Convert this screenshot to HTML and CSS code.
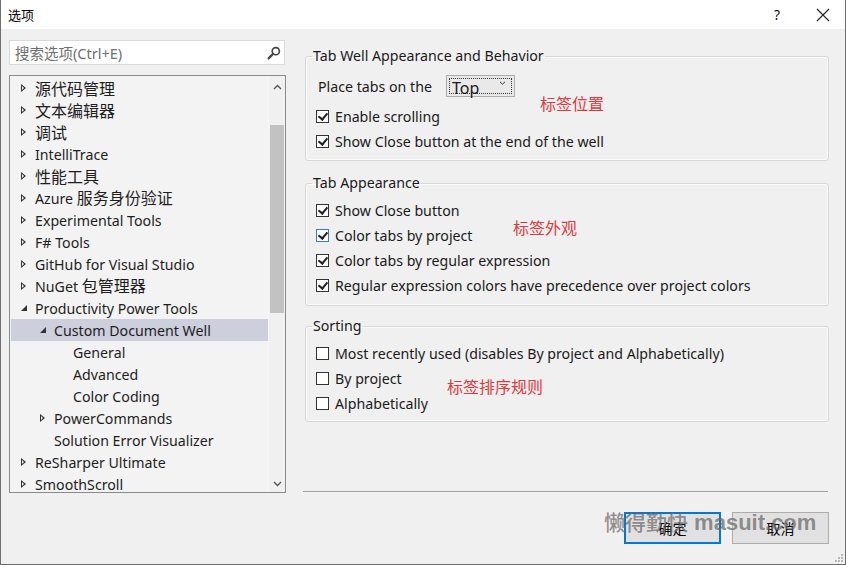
FILE: index.html
```html
<!DOCTYPE html>
<html lang="zh-CN">
<head>
<meta charset="utf-8">
<title>选项</title>
<link rel="stylesheet" href="styles.css">
</head>
<body>
<div class="window">
  <div class="titlebar">
    <span class="title">选项</span>
    <span class="tb-help">?</span>
    <span class="tb-close">
      <svg width="14" height="14" viewBox="0 0 14 14"><path d="M1 1 L13 13 M13 1 L1 13" stroke="#222" stroke-width="1.1" fill="none"/></svg>
    </span>
  </div>
  <div class="main">
    <div class="left">
      <div class="search">
        <span class="placeholder"><span class="cjk-s">搜索选项</span>(Ctrl+E)</span>
        <svg class="search-icon" width="14" height="14" viewBox="0 0 14 14"><circle cx="8.8" cy="5.2" r="3.6" stroke="#444" stroke-width="1.6" fill="none"/><path d="M6.2 7.8 L1.6 12.4" stroke="#444" stroke-width="2.2" stroke-linecap="round"/></svg>
      </div>
      <div class="tree">
        <div class="tree-list">
          <div class="row l1"><span class="tw closed"></span><span class="cjk">源代码管理</span></div>
          <div class="row l1"><span class="tw closed"></span><span class="cjk">文本编辑器</span></div>
          <div class="row l1"><span class="tw closed"></span><span class="cjk">调试</span></div>
          <div class="row l1 lat"><span class="tw closed"></span>IntelliTrace</div>
          <div class="row l1"><span class="tw closed"></span><span class="cjk">性能工具</span></div>
          <div class="row l1"><span class="tw closed"></span><span class="lbl">Azure <span class="cjk">服务身份验证</span></span></div>
          <div class="row l1 lat"><span class="tw closed"></span>Experimental Tools</div>
          <div class="row l1 lat"><span class="tw closed"></span>F# Tools</div>
          <div class="row l1 lat"><span class="tw closed"></span>GitHub for Visual Studio</div>
          <div class="row l1"><span class="tw closed"></span><span class="lbl">NuGet <span class="cjk">包管理器</span></span></div>
          <div class="row l1 lat"><span class="tw open"></span>Productivity Power Tools</div>
          <div class="row l2 lat selected"><span class="tw open"></span>Custom Document Well</div>
          <div class="row l3 lat"><span class="tw"></span>General</div>
          <div class="row l3 lat"><span class="tw"></span>Advanced</div>
          <div class="row l3 lat"><span class="tw"></span>Color Coding</div>
          <div class="row l2 lat"><span class="tw closed"></span>PowerCommands</div>
          <div class="row l2 lat"><span class="tw"></span>Solution Error Visualizer</div>
          <div class="row l1 lat"><span class="tw closed"></span>ReSharper Ultimate</div>
          <div class="row l1 lat"><span class="tw closed"></span>SmoothScroll</div>
        </div>
        <div class="vscroll">
          <svg class="sb-arrow" width="9" height="6" viewBox="0 0 9 6"><path d="M1 5 L4.5 1.5 L8 5" stroke="#555" stroke-width="1.4" fill="none"/></svg>
          <div class="sb-track"><div class="sb-thumb"></div></div>
          <svg class="sb-arrow" width="9" height="6" viewBox="0 0 9 6"><path d="M1 1 L4.5 4.5 L8 1" stroke="#555" stroke-width="1.4" fill="none"/></svg>
        </div>
      </div>
    </div>
    <div class="right">
      <fieldset class="group g1">
        <legend>Tab Well Appearance and Behavior</legend>
        <div class="place-row">
          <span class="place-label">Place tabs on the</span>
          <span class="combo"><span class="combo-focus"><span class="combo-text">Top</span><svg class="combo-chev" width="7" height="4" viewBox="0 0 7 4"><path d="M1 0.8 L3.5 3.2 L6 0.8" stroke="#333" stroke-width="1" fill="none"/></svg></span></span>
        </div>
        <div class="cb-row"><span class="cb checked"></span>Enable scrolling</div>
        <div class="cb-row"><span class="cb checked"></span>Show Close button at the end of the well</div>
        <span class="note n1">标签位置</span>
      </fieldset>
      <fieldset class="group g2">
        <legend>Tab Appearance</legend>
        <div class="cb-row"><span class="cb checked"></span>Show Close button</div>
        <div class="cb-row"><span class="cb checked hover"></span>Color tabs by project</div>
        <div class="cb-row"><span class="cb checked"></span>Color tabs by regular expression</div>
        <div class="cb-row"><span class="cb checked"></span>Regular expression colors have precedence over project colors</div>
        <span class="note n2">标签外观</span>
      </fieldset>
      <fieldset class="group g3">
        <legend>Sorting</legend>
        <div class="cb-row"><span class="cb"></span>Most recently used (disables By project and Alphabetically)</div>
        <div class="cb-row"><span class="cb"></span>By project</div>
        <div class="cb-row"><span class="cb"></span>Alphabetically</div>
        <span class="note n3">标签排序规则</span>
      </fieldset>
      <div class="separator"></div>
      <div class="buttons">
        <button class="btn primary">确定</button>
        <button class="btn">取消</button>
        <span class="watermark"><span class="wm-cjk">懒得勤快</span> masuit.com</span>
      </div>
    </div>
  </div>
  <svg class="grip" width="10" height="10" viewBox="0 0 10 10"><g fill="#b8b8b8"><rect x="8" y="2" width="2" height="2"/><rect x="5" y="5" width="2" height="2"/><rect x="8" y="5" width="2" height="2"/><rect x="2" y="8" width="2" height="2"/><rect x="5" y="8" width="2" height="2"/><rect x="8" y="8" width="2" height="2"/></g></svg>
</div>
</body>
</html>
```

FILE: styles.css
```css
* { box-sizing: border-box; }
html, body { margin: 0; padding: 0; }
body {
  background: #f0f0f0;
  font-family: "Segoe UI", "Noto Sans", "Noto Sans CJK SC", sans-serif;
  font-size: 14.2px;
  color: #1e1e1e;
}
.cjk {
  font-family: "Noto Sans CJK SC", sans-serif;
  font-size: 16px;
}
.lbl { line-height: 22px; }
.cjk-s {
  font-family: "Noto Sans CJK SC", sans-serif;
  font-size: 14.5px;
}
.window {
  position: relative;
  width: 846px;
  height: 565px;
  background: #f0f0f0;
  border-left: 1px solid #6e6e6e;
  border-right: 1px solid #6e6e6e;
  border-bottom: 1px solid #6e6e6e;
  overflow: hidden;
}
.titlebar {
  height: 29px;
  background: #fff;
  display: flex;
  align-items: center;
  margin: 0 -1px;
  padding: 0 0 0 8px;
  font-family: "Noto Sans CJK SC", sans-serif;
}
.title { font-size: 13px; color: #000; flex: 1; }
.tb-help { font-size: 14px; color: #111; width: 46px; text-align: center; font-family: "Noto Sans", sans-serif; }
.tb-close { width: 46px; display: flex; justify-content: center; }
.main {
  display: flex;
  height: 535px;
}
.left {
  width: 285px;
  flex: none;
  padding: 11px 0 0 8px;
}
.search {
  height: 25px;
  width: 276px;
  background: #fff;
  border: 1px solid #dadada;
  display: flex;
  align-items: center;
  padding: 0 0 0 5px;
}
.placeholder {
  flex: 1;
  color: #707070;
  font-size: 14.5px;
}
.search-icon { margin-right: 3px; }
.tree {
  margin-top: 10px;
  width: 277px;
  height: 418px;
  border: 1px solid #8a8a8a;
  background: #f3f3f3;
  display: flex;
  overflow: hidden;
}
.tree-list {
  flex: 1;
  padding-top: 1px;
  padding-left: 1px;
  overflow: hidden;
}
.row {
  height: 22px;
  line-height: 22px;
  display: flex;
  align-items: center;
  white-space: nowrap;
  color: #1e1e1e;
}
.row.lat { padding-top: 1px; }
.row.l1 { padding-left: 9px; }
.row.l2 { padding-left: 28px; }
.row.l3 { padding-left: 47px; }
.row.selected { background: #cdcfdc; }
.tw {
  width: 15px;
  height: 22px;
  flex: none;
  position: relative;
  align-self: flex-start;
}
.row.lat .tw { margin-top: -1px; }
.tw.closed::before {
  content: "";
  position: absolute;
  left: 1px; top: 7px;
  width: 0; height: 0;
  border-top: 4px solid transparent;
  border-bottom: 4px solid transparent;
  border-left: 5px solid #333;
}
.tw.closed::after {
  content: "";
  position: absolute;
  left: 2px; top: 9px;
  width: 0; height: 0;
  border-top: 2px solid transparent;
  border-bottom: 2px solid transparent;
  border-left: 2.5px solid #f3f3f3;
}
.tw.open::before {
  content: "";
  position: absolute;
  left: 1px; top: 8px;
  width: 0; height: 0;
  border-bottom: 6px solid #333;
  border-left: 6px solid transparent;
}
.vscroll {
  width: 17px;
  flex: none;
  display: flex;
  flex-direction: column;
  align-items: center;
  background: #f0f0f0;
  border-left: 1px solid #f7f7f7;
}
.sb-arrow { margin: 8px 0 6px; flex: none; }
.sb-arrow:last-child { margin: 6px 0 5px; }
.sb-track { flex: 1; width: 100%; padding: 29px 1px 0; }
.sb-thumb { height: 188px; background: #c2c2c2; }

.right {
  width: 526px;
  flex: none;
  margin-left: 17px;
  padding-top: 18px;
  display: flex;
  flex-direction: column;
}
.group {
  position: relative;
  margin: 0 0 0 2px;
  width: 524px;
  padding: 0 0 0 10px;
  border: 1px solid #d7d7d7;
  border-radius: 3px;
  box-shadow: inset 0 0 0 1px #fbfbfb;
  color: #1a1a1a;
}
.group legend {
  padding: 0 1px;
  margin-left: -4px;
  line-height: 18px;
  height: 18px;
  color: #1a1a1a;
}
.g1 { padding-bottom: 6px; }
.g2 { margin-top: 13px; padding-top: 6px; padding-bottom: 7px; }
.g3 { margin-top: 11px; padding-top: 6px; padding-bottom: 5px; }
.place-row {
  margin-top: 10px;
  height: 22px;
  display: flex;
  align-items: center;
  padding-left: 2px;
}
.place-label { width: 128px; }
.combo {
  width: 69px;
  height: 22px;
  border: 1px solid #adadad;
  background: #e9e9e9;
  padding: 2px;
  display: flex;
}
.combo-focus {
  flex: 1;
  border: 1px dotted #333;
  display: flex;
  align-items: center;
  padding-left: 2px;
}
.combo-text { font-size: 16px; line-height: 16px; flex: 1; padding-top: 3px; }
.combo-chev { margin-right: 5px; margin-top: -6px; }
.cb-row {
  height: 25px;
  display: flex;
  align-items: center;
  white-space: nowrap;
}
.place-row + .cb-row { margin-top: 7px; }
.cb {
  width: 13px;
  height: 13px;
  border: 1px solid #333;
  background: #fff;
  margin-right: 6px;
  flex: none;
  position: relative;
}
.cb.hover { border-color: #3d7ab9; }
.cb.checked::after {
  content: "";
  position: absolute;
  left: 3px; top: 0px;
  width: 4px; height: 7px;
  border-right: 2px solid #222;
  border-bottom: 2px solid #222;
  transform: rotate(40deg);
}
.note {
  position: absolute;
  color: #e0383c;
  font-family: "Noto Sans CJK SC", sans-serif;
  font-size: 16px;
  line-height: 18px;
}
.n1 { left: 234px; top: 29px; }
.n2 { left: 207px; top: 26px; }
.n3 { left: 141px; top: 42px; }
.separator {
  margin-top: 69px;
  height: 1px;
  width: 525px;
  background: #a0a0a0;
}
.buttons {
  position: relative;
  margin-top: 20px;
  display: flex;
  justify-content: flex-end;
  gap: 11px;
}
.btn {
  width: 97px;
  height: 32px;
  background: #e1e1e1;
  border: 1px solid #adadad;
  font-family: "Noto Sans CJK SC", sans-serif;
  font-size: 14px;
  color: #000;
  padding: 0;
}
.btn.primary { border: 2px solid #0078d7; }
.watermark {
  position: absolute;
  left: 301px;
  top: -4px;
  line-height: 26px;
  font-family: "Liberation Sans", sans-serif;
  font-weight: 700;
  font-size: 22px;
  color: rgba(100, 100, 100, 0.7);
  white-space: nowrap;
  pointer-events: none;
}
.wm-cjk {
  font-family: "Noto Sans CJK SC", sans-serif;
  font-weight: 500;
  font-size: 21px;
}
.grip { position: absolute; right: 2px; bottom: 2px; }
```
